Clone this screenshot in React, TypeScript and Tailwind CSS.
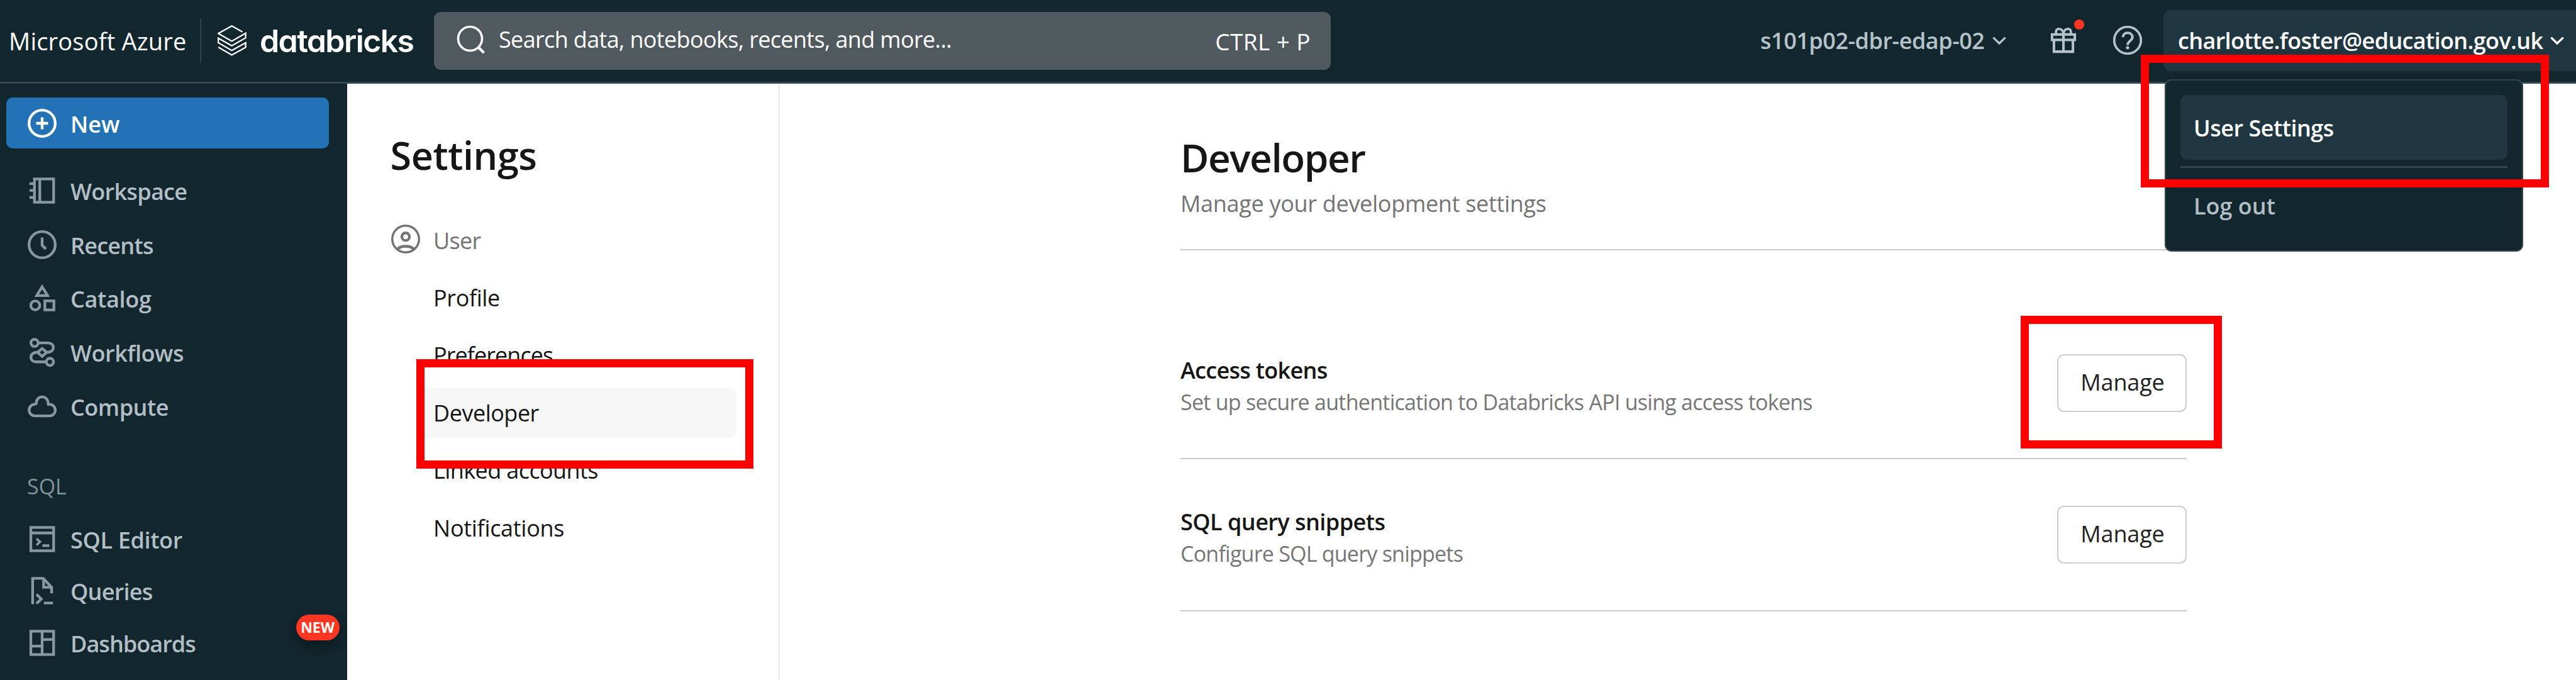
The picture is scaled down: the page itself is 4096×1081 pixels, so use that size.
import React from "react";

type IconProps = { className?: string; children: React.ReactNode };

function Icon({ className = "", children }: IconProps) {
  return (
    <svg
      viewBox="0 0 16 16"
      fill="none"
      stroke="currentColor"
      strokeWidth="1.5"
      className={"h-[46px] w-[46px] shrink-0 " + className}
    >
      {children}
    </svg>
  );
}

const icons: Record<string, React.ReactNode> = {
  plus: (
    <>
      <circle cx="8" cy="8" r="7.25" />
      <path d="M8 4.7v6.6M4.7 8h6.6" />
    </>
  ),
  workspace: (
    <>
      <rect x="3.75" y="1.55" width="10.6" height="12.9" />
      <path d="M6.7 1.6v12.8M1 4.1h2.8M1 7.9h2.8M1 11.8h2.8" />
    </>
  ),
  recents: (
    <>
      <circle cx="8" cy="8" r="7.25" />
      <path d="M8 4v4.4l2.1 2" />
    </>
  ),
  catalog: (
    <>
      <path d="M8 1.7l3 4.85H5z" />
      <circle cx="4.2" cy="12" r="2.5" />
      <rect x="9.5" y="9.5" width="5" height="5" />
    </>
  ),
  workflows: (
    <>
      <circle cx="3.8" cy="2.8" r="2" />
      <circle cx="12.3" cy="13.3" r="2" />
      <path d="M8 5.9L10.5 8 8 10.3 5.5 8z" />
      <path d="M5.9 2.8h5.4c1.7 0 2.9 1.1 2.9 2.5 0 1.6-1.2 2.7-3.6 2.7M5.4 8C3 8 1.8 9.2 1.8 10.7c0 1.6 1.2 2.6 2.9 2.6h5.5" />
    </>
  ),
  compute: (
    <path d="M4 13.25a3.2 3.2 0 0 1 0-6.4c.3 0 .5-.1.7-.3C4.7 4.3 6.1 2.75 8 2.75s3.3 1.5 3.4 4.15h.7a3.17 3.17 0 0 1 0 6.35z" />
  ),
  editor: (
    <>
      <rect x="1.75" y="1.55" width="12.6" height="12.9" />
      <path d="M1.8 4.6h12.6M8.1 11.6H12" />
      <path d="M4.9 7.8l1.9 1.7-1.9 1.8" strokeWidth="1.3" />
    </>
  ),
  queries: (
    <>
      <path d="M2.75 15.5V1.2h5.9l4.6 4.9v3.4M8.8 1.2v4.9h4.4" />
      <path d="M4.9 10l2.6 2.6L4.9 15.1M9 14.8h5" />
    </>
  ),
  dashboards: (
    <>
      <rect x="1.75" y="1.55" width="12.6" height="12.9" />
      <path d="M8 1.6v12.8M1.8 9.8H8M8 6.1h6.3" />
    </>
  ),
  user: (
    <>
      <circle cx="8" cy="8" r="7.4" strokeWidth="1.2" />
      <circle cx="8" cy="6.7" r="2.1" />
      <path d="M3.4 13.6C4.6 12.4 6.2 12 8 12s3.4.4 4.6 1.6" />
    </>
  ),
  gift: (
    <>
      <rect x="1.7" y="4.8" width="12.6" height="3" strokeWidth="1.4" />
      <path d="M2.75 7.8v6.5h10.5V7.8M8 4.8v9.5" strokeWidth="1.4" />
      <path
        d="M8 4.8C7.9 2.7 6.8 1.7 5.5 1.7c-1.1 0-1.6.8-1.6 1.6v1.4M8 4.8c.1-2.1 1.2-3.1 2.5-3.1 1.1 0 1.6.8 1.6 1.6v1.4"
        strokeWidth="1.3"
      />
    </>
  ),
  help: (
    <>
      <circle cx="8" cy="8" r="7.4" strokeWidth="1.3" />
      <path d="M5.4 6.3C5.5 4.7 6.6 3.9 8 3.9c1.6 0 2.7 1 2.7 2.4 0 2-2.7 2.1-2.7 4.3" strokeWidth="1.4" />
      <circle cx="8" cy="12.1" r=".9" fill="currentColor" stroke="none" />
    </>
  ),
};

function Chevron() {
  return (
    <svg viewBox="0 0 22 13" fill="none" stroke="currentColor" strokeWidth="3.4" className="h-[13px] w-[22px] shrink-0">
      <path d="M1.4 1.6L11 11l9.6-9.4" />
    </svg>
  );
}

function NavRow({
  icon,
  label,
  className,
  tracking,
  badge,
}: {
  icon: string;
  label: string;
  className: string;
  tracking: string;
  badge?: string;
}) {
  return (
    <div className={"relative flex items-center pl-[43.5px] " + className}>
      <Icon className="text-[#8598a3]">{icons[icon]}</Icon>
      <span className={"ml-[22.5px] mt-[4px] font-semibold text-[#b2bec5] " + tracking}>{label}</span>
      {badge && (
        <span className="absolute -top-[4px] right-[12px] flex h-[41px] w-[69px] items-center justify-center rounded-full bg-[#ff3621] text-[23px] font-bold text-white shadow-[0_8px_16px_rgba(0,0,0,0.3)]">
          {badge}
        </span>
      )}
    </div>
  );
}

const mainNav = [
  { icon: "workspace", label: "Workspace", tracking: "tracking-[-0.7px]" },
  { icon: "recents", label: "Recents", tracking: "tracking-[-0.75px]" },
  { icon: "catalog", label: "Catalog", tracking: "tracking-[-0.3px]" },
  { icon: "workflows", label: "Workflows", tracking: "tracking-[-0.45px]" },
  { icon: "compute", label: "Compute", tracking: "tracking-[-0.5px]" },
];

const sqlNav = [
  { icon: "editor", label: "SQL Editor", tracking: "tracking-[-0.35px]" },
  { icon: "queries", label: "Queries", tracking: "tracking-[-0.75px]" },
  { icon: "dashboards", label: "Dashboards", tracking: "tracking-[-0.95px]", badge: "NEW" },
];

const settingsNav = [
  { label: "Profile", tracking: "tracking-[-0.4px]" },
  { label: "Preferences", tracking: "tracking-[-0.95px]" },
  { label: "Developer", tracking: "tracking-[-0.5px]", active: true },
  { label: "Linked accounts", tracking: "tracking-[-0.6px]" },
  { label: "Notifications", tracking: "tracking-[-0.3px]" },
];

function Header() {
  return (
    <header className="relative flex h-[133px] shrink-0 items-center border-b-[3px] border-[#34464e] bg-[#12262d] pl-[14px] text-white">
      <span className="w-[304px] text-[38px] tracking-[0.2px]">Microsoft Azure</span>
      <span className="h-[70px] w-[2px] bg-[#2f444d]" />
      <svg
        viewBox="0 0 50 53"
        fill="none"
        stroke="white"
        strokeWidth="2.5"
        className="-mt-[2px] ml-[26px] h-[49px] w-[46px] shrink-0"
      >
        <path d="M43 11.5L24.5 1.2 1.2 14.3l23.3 13.2 24-13.7v8L24.5 35.5 1.2 22.4v7.8l23.3 13.3 24-13.3v8L24.5 51.5 1.2 37.8" />
      </svg>
      <span className="ml-[21px] w-[277px] text-[50px] font-semibold tracking-[-1.6px] font-['Inter'] [font-feature-settings:'cv11']">
        databricks
      </span>
      <div className="-mt-[1px] flex h-[92px] w-[1426px] items-center rounded-[11px] bg-[#50595e] pl-[36px] pr-[32px]">
        <svg viewBox="0 0 46 46" fill="none" stroke="white" strokeWidth="3.6" className="-mt-[4px] h-[46px] w-[46px] shrink-0">
          <circle cx="21.5" cy="21.5" r="19" />
          <path d="M35 35.5l8.5 8.5" strokeWidth="4.2" />
        </svg>
        <span className="-mt-[4px] ml-[21px] tracking-[-0.65px]">Search data, notebooks, recents, and more...</span>
        <span className="ml-auto mt-[2px] text-[37px] tracking-[0.4px]">CTRL + P</span>
      </div>
      <div className="-mt-[2px] ml-auto flex items-center text-[#b5c2c9]">
        <span className="w-[369px] pt-[2px] font-semibold tracking-[-0.48px]">s101p02-dbr-edap-02</span>
        <Chevron />
        <span className="relative ml-[68px] mr-[56px]">
          <Icon>{icons.gift}</Icon>
          <span className="absolute -top-[10px] left-[40px] h-[16px] w-[16px] rounded-full bg-[#ff3621]" />
        </span>
        <Icon>{icons.help}</Icon>
        <div className="ml-[34px] flex h-[97px] w-[656px] items-center rounded-l-[11px] bg-[#203741] pl-[23px] text-white">
          <span className="w-[592px] pt-[2px] font-semibold tracking-[-0.65px]">charlotte.foster@education.gov.uk</span>
          <Chevron />
        </div>
      </div>

      <div className="absolute left-[3442px] top-[126px] z-10 h-[274px] w-[570px] rounded-[11px] border-[2px] border-[#33464e] bg-[#12262d] px-[23px] pt-[23px]">
        <div className="flex h-[103px] items-center rounded-[11px] bg-[#203741] pl-[21px] pt-[2px] font-semibold tracking-[-0.5px]">
          User Settings
        </div>
        <div className="mt-[10px] h-[3px] bg-[#33464e]" />
        <div className="flex h-[120px] items-center pl-[21px] pt-[2px] font-semibold tracking-[0px] text-[#b2bec5]">
          Log out
        </div>
      </div>
    </header>
  );
}

function ManageRow({
  title,
  titleTracking,
  description,
  descriptionTracking,
  className,
}: {
  title: string;
  titleTracking: string;
  description: string;
  descriptionTracking: string;
  className: string;
}) {
  return (
    <div className={"flex items-start justify-between border-b-[2px] border-[#cbcbcb] " + className}>
      <div className="pt-[2px]">
        <h3 className={"font-semibold " + titleTracking}>{title}</h3>
        <p className={"text-[34px] text-[#767676] " + descriptionTracking}>{description}</p>
      </div>
      <button className="mt-[1px] flex h-[92px] w-[206px] items-center justify-center rounded-[11px] border-[2px] border-[#cecece] bg-white pb-[3px] pl-[2px] tracking-[-0.15px] text-[#222]">
        Manage
      </button>
    </div>
  );
}

export default function App() {
  return (
    <div className="relative flex h-[1081px] w-[4096px] flex-col overflow-hidden bg-white font-['Open_Sans','Noto_Sans',sans-serif] text-[36px] leading-[50px] whitespace-nowrap text-[#161616]">
      <Header />
      <div className="flex min-h-0 flex-1">
        <aside className="w-[551.6px] shrink-0 bg-[#12262d]">
          <div className="ml-[10px] mt-[22px] flex h-[81px] w-[513px] items-center rounded-[10px] bg-[#2372b5] pl-[33.5px] text-white">
            <Icon>{icons.plus}</Icon>
            <span className="ml-[22.5px] mt-[4px] font-semibold">New</span>
          </div>
          <nav className="mt-[24px]">
            {mainNav.map((n) => (
              <NavRow key={n.label} {...n} className="h-[85.7px]" />
            ))}
          </nav>
          <h3 className="mb-[17px] ml-[43px] mt-[60px] text-[34px] text-[#7f929d]">SQL</h3>
          <nav>
            {sqlNav.map((n) => (
              <NavRow key={n.label} {...n} className="h-[82.7px]" />
            ))}
          </nav>
        </aside>

        <section className="w-[688px] shrink-0 border-r-[2px] border-[#e9e9e9] pt-[74px]">
          <h1 className="mb-[49px] ml-[69px] text-[61px] font-[570] leading-[80px] tracking-[-0.4px]">Settings</h1>
          <div className="flex h-[91.4px] items-center pl-[70px] text-[#737373]">
            <Icon className="-mt-[4px]">{icons.user}</Icon>
            <span className="ml-[21.5px] mt-[2px] tracking-[-0.75px]">User</span>
          </div>
          {settingsNav.map((n) => (
            <div key={n.label} className="flex h-[91.4px] items-center pl-[116px]">
              <span
                className={
                  "flex h-[80px] w-[503px] items-center rounded-[11px] pl-[21.5px] pt-[2px] " +
                  n.tracking +
                  (n.active ? " bg-[#f7f7f7]" : "")
                }
              >
                {n.label}
              </span>
            </div>
          ))}
        </section>

        <main className="ml-[637.4px] w-[1600px] shrink-0 pt-[76px]">
          <div className="h-[189px] border-b-[2px] border-[#cbcbcb] pt-[1px]">
            <h2 className="text-[62px] font-[570] leading-[80px] tracking-[-1.4px]">Developer</h2>
            <p className="mt-[9px] tracking-[-0.3px] text-[#747474]">Manage your development settings</p>
          </div>
          <ManageRow
            className="h-[332px] pt-[164px]"
            title="Access tokens"
            titleTracking="tracking-[-0.7px]"
            description="Set up secure authentication to Databricks API using access tokens"
            descriptionTracking="tracking-[-0.74px]"
          />
          <ManageRow
            className="h-[242px] pt-[73px]"
            title="SQL query snippets"
            titleTracking="tracking-[-0.53px]"
            description="Configure SQL query snippets"
            descriptionTracking="tracking-[-0.77px]"
          />
        </main>
      </div>

      <div className="absolute left-[662px] top-[571px] z-20 h-[174px] w-[536px] border-[13px] border-[#ff0000]" />
      <div className="absolute left-[3404px] top-[87px] z-20 h-[211px] w-[649px] border-[13px] border-[#ff0000]" />
      <div className="absolute left-[3213px] top-[502px] z-20 h-[211px] w-[320px] border-[13px] border-[#ff0000]" />
    </div>
  );
}
